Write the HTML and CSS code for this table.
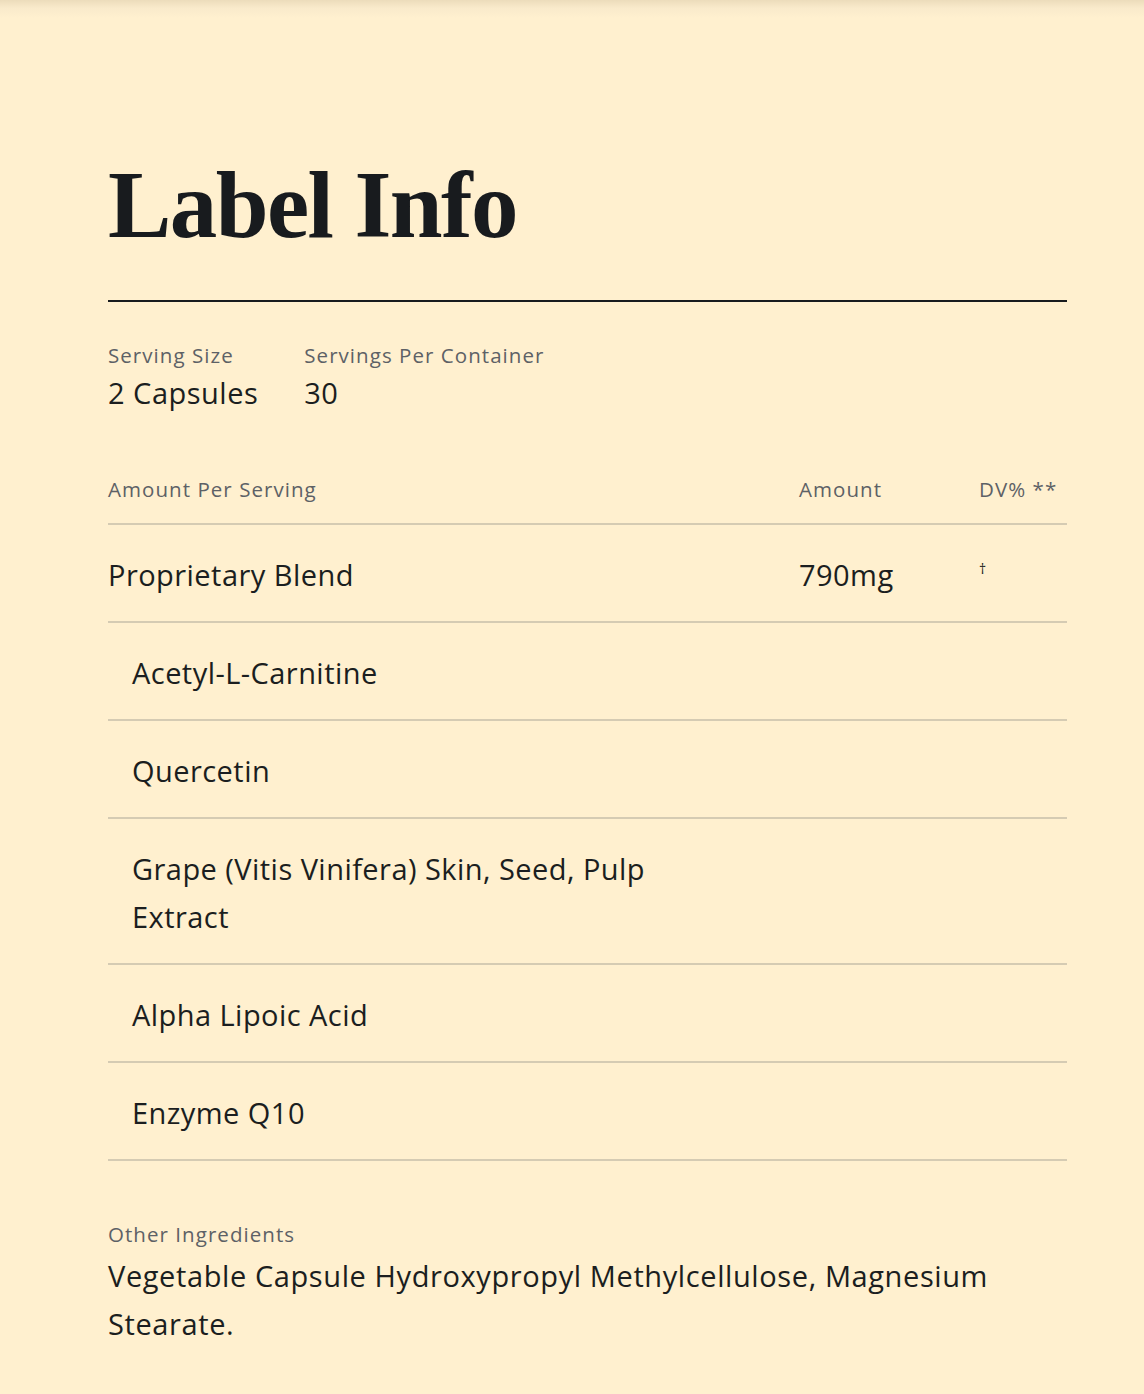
FILE: index.html
```
<!DOCTYPE html>
<html lang="en">
<head>
<meta charset="utf-8">
<title>Label Info</title>
<link rel="stylesheet" href="styles.css">
</head>
<body>
<main class="label">
  <h1 class="title">Label Info</h1>
  <hr class="rule">
  <div class="serving">
    <div class="serving-item">
      <div class="caption">Serving Size</div>
      <div class="value">2 Capsules</div>
    </div>
    <div class="serving-item">
      <div class="caption">Servings Per Container</div>
      <div class="value">30</div>
    </div>
  </div>
  <div class="facts">
    <div class="row head">
      <div class="caption">Amount Per Serving</div>
      <div class="caption">Amount</div>
      <div class="caption">DV% **</div>
    </div>
    <div class="row">
      <div class="name">Proprietary Blend</div>
      <div class="amt">790mg</div>
      <div class="dv"><sup class="dagger">†</sup></div>
    </div>
    <div class="row sub">
      <div class="name">Acetyl-L-Carnitine</div>
    </div>
    <div class="row sub">
      <div class="name">Quercetin</div>
    </div>
    <div class="row sub">
      <div class="name">Grape (Vitis Vinifera) Skin, Seed, Pulp Extract</div>
    </div>
    <div class="row sub">
      <div class="name">Alpha Lipoic Acid</div>
    </div>
    <div class="row sub">
      <div class="name">Enzyme Q10</div>
    </div>
  </div>
  <div class="other">
    <div class="caption">Other Ingredients</div>
    <p class="other-text">Vegetable Capsule Hydroxypropyl Methylcellulose, Magnesium Stearate.</p>
  </div>
</main>
</body>
</html>
```

FILE: styles.css
```
html {
  background: linear-gradient(to bottom, #ecdcbb 0px, #f9eacb 8px, #fff0cf 18px) no-repeat, #fff0cf;
  min-height: 100%;
}
body {
  margin: 0;
  font-family: "Open Sans", "Lato", sans-serif;
  color: #1b1e20;
}
.label {
  width: 959px;
  padding: 158px 0 60px 108px;
}
.title {
  margin: 0;
  font-family: "Liberation Serif", "Times New Roman", serif;
  font-weight: 700;
  font-size: 95px;
  line-height: 95px;
  letter-spacing: -1.6px;
  color: #181b1e;
}
.rule {
  margin: 47px 0 0;
  border: 0;
  height: 2px;
  background: #181b1e;
}
.serving {
  display: flex;
  gap: 46px;
  margin-top: 41px;
}
.caption {
  font-size: 20.5px;
  line-height: 24px;
  letter-spacing: 1.05px;
  color: #5d6166;
}
.value {
  font-size: 29px;
  line-height: 36px;
  letter-spacing: 0.5px;
  margin-top: 8px;
}
.facts {
  margin-top: 66px;
}
.row {
  display: grid;
  grid-template-columns: 691px 180px 1fr;
  border-bottom: 2px solid #d5cbb3;
  padding: 26px 0 22px;
  font-size: 29px;
  line-height: 48px;
  letter-spacing: 0.45px;
}
.row.head {
  padding: 0 0 22px;
}
.row.head .caption {
  line-height: 24px;
}
.row.sub .name {
  padding-left: 24px;
  max-width: 560px;
}
.dagger {
  font-size: 14px;
  line-height: 1;
  vertical-align: top;
  position: relative;
  top: 11px;
}
.other {
  margin-top: 61px;
}
.other-text {
  margin: 6px 0 0;
  font-size: 29px;
  line-height: 48px;
  letter-spacing: 0.6px;
  max-width: 940px;
}
```
